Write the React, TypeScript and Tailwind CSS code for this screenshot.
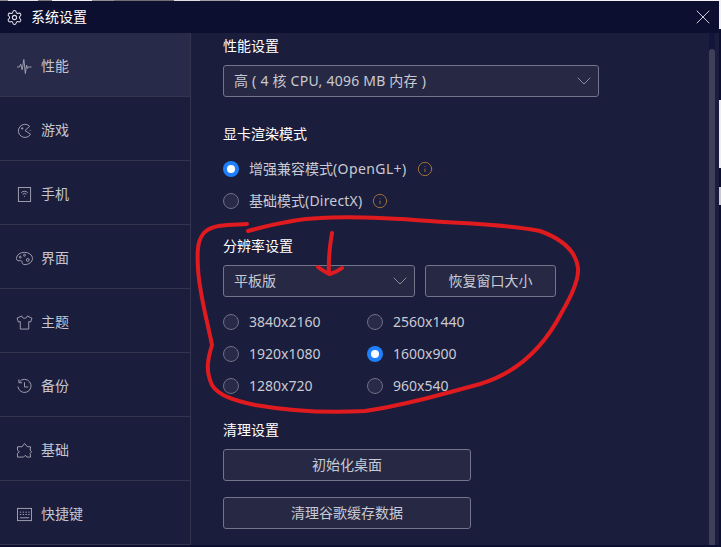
import type { ReactNode } from 'react'
import { ChevronDown, Info, Settings, X } from 'lucide-react'

const font = { fontFamily: '"Noto Sans", "Noto Sans CJK SC", sans-serif' }

function Icon({ children }: { children: ReactNode }) {
  return (
    <svg viewBox="0 0 16 16" fill="none" stroke="#a3a4b3" strokeWidth="1" className="w-[15px] h-[15px] shrink-0 overflow-visible">
      {children}
    </svg>
  )
}

const navItems: { label: string; icon: ReactNode }[] = [
  {
    label: '性能',
    icon: <path d="M0 8.500h2.500l1.500-3 1.500 6 1.800-11 1.600 15 1.300-9 1 3.500 1-1.500h3.300" />,
  },
  {
    label: '游戏',
    icon: (
      <>
        <path d="M13.500 3.500A7 7 0 1 0 14.500 12L8.500 8z" />
        <path d="M5.500 4.500v2.500M4.200 5.700h2.600M13.500 8h1" />
      </>
    ),
  },
  {
    label: '手机',
    icon: (
      <>
        <rect x="1.500" y=".5" width="13" height="15" />
        <path d="M4.500 6a5 5 0 0 1 7 0M6 7.800a2.800 2.800 0 0 1 4 0M8 9.500v1" />
      </>
    ),
  },
  {
    label: '界面',
    icon: (
      <>
        <path d="M8 1.500C3.500 1.500-.5 4-.5 8c0 2.800 2.200 2.500 4 2.300 1.800-.2 2 .8 2 2 0 1.400 1.200 2.200 3 2.200 4 0 8-2.700 8-6.500S12.500 1.500 8 1.500z" />
        <circle cx="3.500" cy="6.500" r="1" />
        <circle cx="8" cy="4.500" r="1" />
        <circle cx="11.500" cy="9.500" r="1.500" />
      </>
    ),
  },
  {
    label: '主题',
    icon: <path d="M5 1 0 3.500l1.500 4L3.500 7v8h9V7l2 .5 1.500-4L11 1C10.500 2.800 9.500 3.500 8 3.500S5.500 2.800 5 1z" />,
  },
  {
    label: '备份',
    icon: (
      <>
        <path d="M2.500 3A7 7 0 1 1 1 8" />
        <path d="M2 .5V4h3.500M8 3.500V8.500h4" />
      </>
    ),
  },
  {
    label: '基础',
    icon: (
      <path d="M5.500 4 8 .5 11 4h3.500l-.5 3.500 1.500 2L14 11l.5 4H10.500L9 13l-2 2H.5v-4L2.500 9.500.5 7.500V4z" />
    ),
  },
  {
    label: '快捷键',
    icon: (
      <>
        <rect x=".5" y="1.500" width="15" height="13" />
        <path d="M3 5.500h1.500M6 5.500h1.500M9 5.500h1.500M12 5.500h1.500M3 8h1.500M6 8h1.500M9 8h1.500M12 8h1.500M3 11.500h10" />
      </>
    ),
  },
]

// the mottled 1px strip of whatever sits behind the dialog
const topStrip = [
  ['w-[8px]', 'bg-[#8b8b8b]'],
  ['w-[30px]', 'bg-[#e6e6e6]'],
  ['w-[14px]', 'bg-[#7c7c7c]'],
  ['w-[40px]', 'bg-[#f0f0f0]'],
  ['w-[22px]', 'bg-[#8f8f8f]'],
  ['w-[60px]', 'bg-[#6f6f6f]'],
  ['w-[26px]', 'bg-[#e0e0e0]'],
  ['w-[40px]', 'bg-[#a0a0a0]'],
  ['flex-1', 'bg-[#f2f2f2]'],
]

function Radio({ label, checked }: { label: ReactNode; checked?: boolean }) {
  return (
    <div className="flex items-center gap-[10px] h-4">
      {checked ? (
        <span className="w-4 h-4 rounded-full bg-[#1e80ff] flex items-center justify-center">
          <span className="w-2 h-2 rounded-full bg-white" />
        </span>
      ) : (
        <span className="w-4 h-4 rounded-full border border-[#6f7084] bg-[#282a48]" />
      )}
      <span className="text-sm text-[#c9cad3]">{label}</span>
    </div>
  )
}

function Select({ label, className }: { label: string; className: string }) {
  return (
    <div
      className={`h-8 flex items-center justify-between pl-[10px] pr-[2px] rounded-[3px] border border-[#73748a] bg-[#272944] text-sm text-[#c9cad3] ${className}`}
    >
      <span>{label}</span>
      <ChevronDown size={24} strokeWidth={1} color="#8a8b9c" />
    </div>
  )
}

function Btn({ label, className }: { label: string; className: string }) {
  return (
    <div
      className={`h-8 flex items-center justify-center rounded-[3px] border border-[#73748a] bg-[#272944] text-sm text-[#c9cad3] ${className}`}
    >
      {label}
    </div>
  )
}

function Title({ children }: { children: ReactNode }) {
  return <div className="text-sm leading-5 text-white">{children}</div>
}

export default function App() {
  return (
    <div className="relative w-[721px] h-[547px] overflow-hidden bg-[#0c0f30] flex flex-col" style={font}>
      <div className="h-px flex">
        {topStrip.map(([w, bg], i) => (
          <div key={i} className={`${w} ${bg}`} />
        ))}
      </div>
      <div className="w-[719px] h-[32px] pl-[6px] pr-[4px] flex items-center justify-between text-sm text-white">
        <div className="flex items-center gap-[8px]">
          <Settings size={17} strokeWidth={1.5} color="#dcdce2" />
          <span>系统设置</span>
        </div>
        <X size={24} strokeWidth={1} color="#c9cad3" />
      </div>

      <div className="w-[719px] h-[512px] flex bg-[#1a1d3c]">
        {/* Sidebar */}
        <div className="w-[191px] shrink-0 border-r border-[#33354f]">
          {navItems.map((item, i) => (
            <div
              key={item.label}
              className={`h-16 pl-[17px] pt-[3px] flex items-center gap-[9px] border-b border-[#33354f] text-sm text-[#c4c5d0] ${
                i === 0 ? 'bg-[#272a49]' : ''
              }`}
            >
              <Icon>{item.icon}</Icon>
              <span>{item.label}</span>
            </div>
          ))}
        </div>

        {/* Content */}
        <div className="flex-1 pl-[32px] flex">
          <div className="w-[486px] pt-[3px]">
            <Title>性能设置</Title>
            <Select label="高 ( 4 核 CPU, 4096 MB 内存 )" className="w-[376px] mt-[9px] tracking-[0.23px]" />

            <div className="mt-[27px]">
              <Title>显卡渲染模式</Title>
            </div>
            <div className="mt-[17px] flex flex-col gap-4">
              <div className="flex items-center gap-[10px]">
                <Radio
                  label={
                    <>
                      增强兼容模式<span className="tracking-[0.4px]">(OpenGL+)</span>
                    </>
                  }
                  checked
                />
                <Info size={16} strokeWidth={1.4} color="#a8763a" />
              </div>
              <div className="flex items-center gap-[10px]">
                <Radio
                  label={
                    <>
                      基础模式<span className="tracking-[0.2px]">(DirectX)</span>
                    </>
                  }
                />
                <Info size={16} strokeWidth={1.4} color="#a8763a" />
              </div>
            </div>

            <div className="mt-[27px]">
              <Title>分辨率设置</Title>
            </div>
            <div className="mt-[9px] flex gap-[10px]">
              <Select label="平板版" className="w-[192px]" />
              <Btn label="恢复窗口大小" className="w-[131px]" />
            </div>
            <div className="mt-[17px] grid grid-cols-[144px_144px] gap-y-4">
              <Radio label="3840x2160" />
              <Radio label="2560x1440" />
              <Radio label="1920x1080" />
              <Radio label="1600x900" checked />
              <Radio label="1280x720" />
              <Radio label="960x540" />
            </div>

            <div className="mt-[26px]">
              <Title>清理设置</Title>
            </div>
            <Btn label="初始化桌面" className="w-[248px] mt-[9px]" />
            <Btn label="清理谷歌缓存数据" className="w-[248px] mt-4" />
          </div>

          {/* Scrollbar */}
          <div className="w-[6px] pt-[16px] bg-[#13163a]">
            <div className="h-full rounded-t-sm bg-[#3e4059]" />
          </div>
        </div>
      </div>
      <div className="h-[2px]" />

      {/* Bits of the page behind the dialog, showing past its right edge */}
      <div className="absolute right-0 top-0 w-[2px] h-[29px] bg-[#f2f2f2]" />
      <div className="absolute right-0 top-[100px] w-[2px] h-[68px] bg-[#eeeeee]" />
      <div className="absolute right-0 top-[187px] w-[2px] h-[18px] bg-[#c8c8d0]" />

      {/* Hand-drawn red annotation */}
      <svg viewBox="0 0 721 547" fill="none" className="absolute inset-0 w-[721px] h-[547px] pointer-events-none">
        <path
          d="M247 224C232 225 215 224 206 231C197 238 197 252 198 268C199 292 207 320 212 345C208 358 205 370 212 385C218 395 232 400 255 405C290 411 330 413 365 411C400 406 440 395 480 384C520 372 545 345 562 312C572 295 579 280 578 268C576 252 565 240 540 231C505 224 470 224 430 221C390 218 350 216 320 218C295 219 270 225 248 231"
          stroke="#e01b1f"
          strokeWidth="4"
          strokeLinecap="round"
        />
        <path
          d="M332 233C330 245 328 255 329 274M318 267C322 270 326 273 330 274C334 273 338 271 342 268"
          stroke="#e01b1f"
          strokeWidth="4"
          strokeLinecap="round"
        />
      </svg>
    </div>
  )
}
